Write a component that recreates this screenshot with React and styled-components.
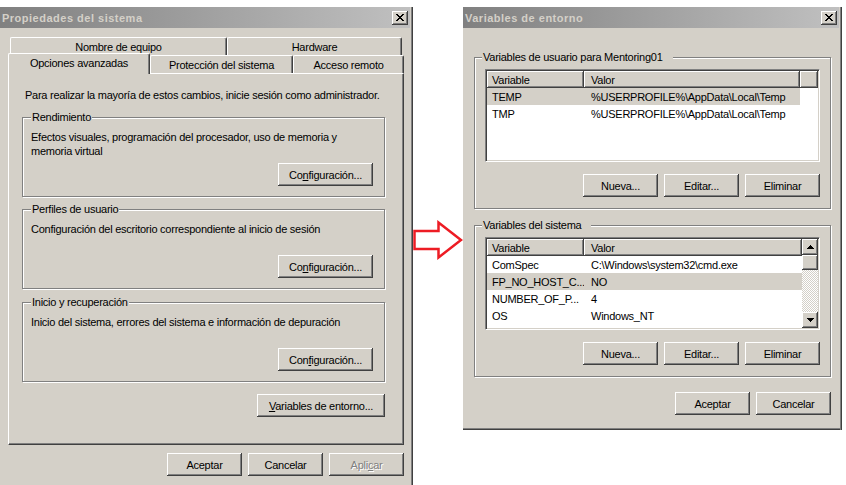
import React from 'react';
import styled, { createGlobalStyle, css } from 'styled-components';

const face = '#d4d0c8';
const light = '#ffffff';
const shadow = '#808080';
const dark = '#404040';

const raised = css`
  box-shadow: inset -1px -1px ${dark}, inset 1px 1px ${light}, inset -2px -2px ${shadow}, inset 2px 2px ${face};
`;

const GlobalStyle = createGlobalStyle`
  html, body { margin: 0; padding: 0; background: #fff; }
  body {
    font-family: "Liberation Sans", Arial, sans-serif;
    font-size: 11px;
    letter-spacing: -0.25px;
    color: #000;
  }
`;

const Page = styled.div`
  display: flex;
  align-items: flex-start;
  width: 846px;
  height: 485px;
  overflow: hidden;
`;

const Window = styled.div`
  flex: none;
  width: ${p => p.$w}px;
  height: ${p => p.$h}px;
  margin-top: 7px;
  padding-right: 3px;
  box-sizing: border-box;
  display: flex;
  flex-direction: column;
  background: ${face};
  overflow: hidden;
  box-shadow: inset -1px 0 ${dark}, inset -2px 0 ${shadow}
    ${p => (p.$framed ? `, inset 0 -1px ${dark}, inset 0 -2px ${shadow}` : '')};
`;

const TitleBar = styled.div`
  flex: none;
  height: 21px;
  display: flex;
  align-items: center;
  justify-content: space-between;
  padding: 0 2px 0 2px;
  background: linear-gradient(90deg, #808080, #c0c0c0);
  color: ${face};
  font-weight: bold;
  font-size: 11px;
  letter-spacing: 0.5px;
`;

const CloseButton = styled.div`
  width: 16px;
  height: 14px;
  display: flex;
  align-items: center;
  justify-content: center;
  background: ${face};
  ${raised}
`;

const Button = styled.button`
  flex: none;
  width: ${p => p.$w || 75}px;
  height: 23px;
  padding: 0;
  border: none;
  background: ${face};
  font: inherit;
  letter-spacing: inherit;
  color: #000;
  ${raised}

  &:disabled {
    color: ${shadow};
    text-shadow: 1px 1px ${light};
  }
`;

const ButtonRow = styled.div`
  display: flex;
  justify-content: flex-end;
  gap: 6px;
  margin-top: ${p => p.$mt || 0}px;
`;

/* ---------- left dialog ---------- */

const LeftBody = styled.div`
  flex: 1;
  display: flex;
  flex-direction: column;
  padding: 9px 6px 0 8px;
`;

const TabRow = styled.div`
  display: flex;
  height: 18px;
  padding-left: ${p => p.$indent || 0}px;
`;

const Tab = styled.div`
  flex: none;
  width: ${p => p.$w}px;
  height: 18px;
  box-sizing: border-box;
  display: flex;
  align-items: center;
  justify-content: center;
  background: ${face};
  border-top: 1px solid ${light};
  border-left: 1px solid ${light};
  border-right: 1px solid ${dark};
  border-radius: 2px 2px 0 0;
  box-shadow: inset -1px 0 ${shadow};
  position: relative;

  ${p => p.$active && css`
    height: 21px;
    margin-top: -2px;
    padding-bottom: 2px;
    z-index: 1;
  `}
`;

const Panel = styled.div`
  height: 372px;
  box-sizing: border-box;
  display: flex;
  flex-direction: column;
  padding: 15px 18px 0 13px;
  border-top: 1px solid ${light};
  border-left: 1px solid ${light};
  border-right: 1px solid ${dark};
  border-bottom: 1px solid ${dark};
  box-shadow: inset -1px -1px ${shadow};
`;

const Intro = styled.div`
  padding-left: 3px;
  line-height: 13px;
  white-space: nowrap;
`;

const Group = styled.fieldset`
  margin: ${p => p.$mt || 0}px 0 0;
  padding: ${p => p.$pad};
  min-width: 0;
  border: 1px solid ${shadow};
  box-shadow: inset 1px 1px ${light}, 1px 1px ${light};
  display: flex;
  flex-direction: column;
`;

const Legend = styled.legend`
  padding: 0 ${p => p.$gap || 1}px 0 1px;
  margin-left: ${p => p.$shift || 0}px;
  line-height: 13px;
  background: ${face};
`;

const Desc = styled.div`
  min-height: 28px;
  line-height: 14px;
`;

/* ---------- right dialog ---------- */

const RightBody = styled.div`
  flex: 1;
  display: flex;
  flex-direction: column;
  padding: 23px 8px 0 11px;
`;

const ListBox = styled.div`
  height: 93px;
  box-sizing: border-box;
  display: flex;
  background: #fff;
  overflow: hidden;
  border-top: 1px solid ${shadow};
  border-left: 1px solid ${shadow};
  border-right: 1px solid ${light};
  border-bottom: 1px solid ${light};
  box-shadow: inset 1px 1px ${dark}, inset -1px -1px ${face};
  padding: 1px;
`;

const ListMain = styled.div`
  flex: 1;
  min-width: 0;
  display: flex;
  flex-direction: column;
  overflow: hidden;
`;

const Header = styled.div`
  flex: none;
  display: flex;
  height: 17px;
`;

const HeadCell = styled.div`
  flex: ${p => (p.$w ? 'none' : '1')};
  width: ${p => (p.$w ? `${p.$w}px` : 'auto')};
  box-sizing: border-box;
  display: flex;
  align-items: center;
  padding-left: ${p => p.$pl || 0}px;
  background: ${face};
  box-shadow: inset -1px -1px ${dark}, inset 1px 1px ${light}, inset -2px -2px ${shadow};
`;

const Row = styled.div`
  flex: none;
  display: flex;
  align-items: center;
  width: ${p => p.$w}px;
  height: 17px;
  background: ${p => (p.$selected ? face : 'transparent')};
`;

const Cell = styled.div`
  flex: none;
  width: ${p => p.$w}px;
  box-sizing: border-box;
  padding-left: ${p => p.$pl}px;
  white-space: nowrap;
  overflow: hidden;
`;

const Scrollbar = styled.div`
  flex: none;
  width: 16px;
  display: flex;
  flex-direction: column;
`;

const ScrollPart = styled.div`
  flex: none;
  height: ${p => p.$h}px;
  display: flex;
  align-items: center;
  justify-content: center;
  background: ${face};
  ${raised}
`;

const Track = styled.div`
  flex: 1;
  background: repeating-conic-gradient(${light} 0 25%, ${face} 0 50%) 0 0 / 2px 2px;
`;

const ArrowSlot = styled.div`
  flex: none;
  width: 50px;
  padding-top: 220px;
  line-height: 0;
`;

const CloseGlyph = () => (
  <svg width="8" height="7" viewBox="0 0 8 7" shapeRendering="crispEdges">
    <path d="M0 0h2v1h-2zM6 0h2v1h-2zM1 1h2v1h-2zM5 1h2v1h-2zM2 2h4v1h-4zM3 3h2v1h-2zM2 4h4v1h-4zM1 5h2v1h-2zM5 5h2v1h-2zM0 6h2v1h-2zM6 6h2v1h-2z" fill="#000" />
  </svg>
);

const Triangle = ({ down }) => (
  <svg width="7" height="4" viewBox="0 0 7 4" shapeRendering="crispEdges">
    <path d={down ? 'M0 0h7v1h-1v1h-1v1h-1v1h-1v-1h-1v-1h-1v-1h-1z' : 'M3 0h1v1h1v1h1v1h1v1h-7v-1h1v-1h1v-1h1z'} fill="#000" />
  </svg>
);

function Caption({ title }) {
  return (
    <TitleBar>
      <span>{title}</span>
      <CloseButton>
        <CloseGlyph />
      </CloseButton>
    </TitleBar>
  );
}

function VarList({ rows, scroll }) {
  const valW = scroll ? 218 : 216;
  return (
    <ListBox>
      <ListMain>
        <Header>
          <HeadCell $w={97} $pl={5}>Variable</HeadCell>
          <HeadCell $w={valW} $pl={7}>Valor</HeadCell>
          {!scroll && <HeadCell />}
        </Header>
        {rows.map(r => (
          <Row key={r.name} $w={97 + valW} $selected={r.selected}>
            <Cell $w={97} $pl={5}>{r.name}</Cell>
            <Cell $w={valW} $pl={7}>{r.value}</Cell>
          </Row>
        ))}
      </ListMain>
      {scroll && (
        <Scrollbar>
          <ScrollPart $h={16}><Triangle /></ScrollPart>
          <ScrollPart $h={15} />
          <Track />
          <ScrollPart $h={16}><Triangle down /></ScrollPart>
        </Scrollbar>
      )}
    </ListBox>
  );
}

const userVars = [
  { name: 'TEMP', value: '%USERPROFILE%\\AppData\\Local\\Temp', selected: true },
  { name: 'TMP', value: '%USERPROFILE%\\AppData\\Local\\Temp' },
];

const systemVars = [
  { name: 'ComSpec', value: 'C:\\Windows\\system32\\cmd.exe' },
  { name: 'FP_NO_HOST_C...', value: 'NO', selected: true },
  { name: 'NUMBER_OF_P...', value: '4' },
  { name: 'OS', value: 'Windows_NT' },
  { name: 'Path', value: 'C:\\Windows\\system32;C:\\Windows;C:\\Windows\\System32\\Wbem' },
];

const groups = [
  {
    title: 'Rendimiento',
    text: 'Efectos visuales, programación del procesador, uso de memoria y memoria virtual',
    button: <>Co<u>n</u>figuración...</>,
    gap: 9,
  },
  {
    title: 'Perfiles de usuario',
    text: 'Configuración del escritorio correspondiente al inicio de sesión',
    button: <>Co<u>n</u>figuración...</>,
    gap: 6,
  },
  {
    title: 'Inicio y recuperación',
    text: 'Inicio del sistema, errores del sistema e información de depuración',
    button: <>Con<u>f</u>iguración...</>,
    gap: 7,
  },
];

export default function App() {
  return (
    <>
      <GlobalStyle />
      <Page>
        <Window $w={413} $h={478}>
          <Caption title="Propiedades del sistema" />
          <LeftBody>
            <TabRow $indent={2}>
              <Tab $w={217}>Nombre de equipo</Tab>
              <Tab $w={175}>Hardware</Tab>
            </TabRow>
            <TabRow>
              <Tab $w={142} $active>Opciones avanzadas</Tab>
              <Tab $w={143}>Protección del sistema</Tab>
              <Tab $w={111}>Acceso remoto</Tab>
            </TabRow>
            <Panel>
              <Intro>Para realizar la mayoría de estos cambios, inicie sesión como administrador.</Intro>
              {groups.map(g => (
                <Group key={g.title} $mt={g.gap} $pad="6px 11px 10px 8px">
                  <Legend>{g.title}</Legend>
                  <Desc>{g.text}</Desc>
                  <ButtonRow $mt={5}>
                    <Button $w={95}>{g.button}</Button>
                  </ButtonRow>
                </Group>
              ))}
              <ButtonRow $mt={12}>
                <Button $w={128}><u>V</u>ariables de entorno...</Button>
              </ButtonRow>
            </Panel>
            <ButtonRow $mt={8}>
              <Button>Aceptar</Button>
              <Button>Cancelar</Button>
              <Button disabled>Apli<u>c</u>ar</Button>
            </ButtonRow>
          </LeftBody>
        </Window>

        <ArrowSlot>
          <svg width="50" height="40" viewBox="0 0 50 40">
            <polygon
              points="1.5,11 25.5,11 25.5,2.5 48,20 25.5,37.5 25.5,29 1.5,29"
              fill="#fff"
              stroke="#ed1c24"
              strokeWidth="2.5"
              strokeLinejoin="miter"
            />
          </svg>
        </ArrowSlot>

        <Window $w={379} $h={423} $framed>
          <Caption title="Variables de entorno" />
          <RightBody>
            <Group $pad="5px 10px 11px 10px">
              <Legend $gap={10} $shift={-3}>Variables de usuario para Mentoring01</Legend>
              <VarList rows={userVars} />
              <ButtonRow $mt={12}>
                <Button>Nueva...</Button>
                <Button>Editar...</Button>
                <Button>Eliminar</Button>
              </ButtonRow>
            </Group>
            <Group $mt={10} $pad="5px 10px 11px 10px">
              <Legend $gap={10} $shift={-3}>Variables del sistema</Legend>
              <VarList rows={systemVars} scroll />
              <ButtonRow $mt={12}>
                <Button>Nueva...</Button>
                <Button>Editar...</Button>
                <Button>Eliminar</Button>
              </ButtonRow>
            </Group>
            <ButtonRow $mt={15}>
              <Button>Aceptar</Button>
              <Button>Cancelar</Button>
            </ButtonRow>
          </RightBody>
        </Window>
      </Page>
    </>
  );
}
